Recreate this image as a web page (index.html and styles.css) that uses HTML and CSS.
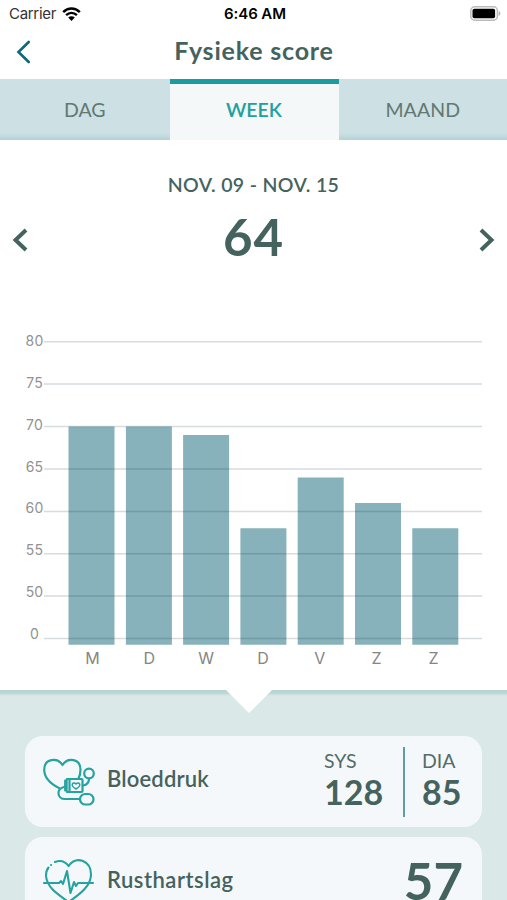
FILE: index.html
```html
<!DOCTYPE html>
<html lang="nl">
<head>
<meta charset="utf-8">
<title>Fysieke score</title>
<link rel="stylesheet" href="styles.css">
</head>
<body>
<div class="screen">
  <div class="status">
    <div class="carrier"><span>Carrier</span>
      <svg width="19" height="14" viewBox="0 0 19 14" fill="none" stroke="#000" stroke-width="2.5"><path d="M1.2 5.1C6 .4 13 .4 17.8 5.1M4.1 8.2c3.2-3 7.600-3 10.800 0"/><path d="M6.200 10.600c1.900-1.700 4.700-1.700 6.600 0L9.500 14z" fill="#000" stroke="none"/></svg>
    </div>
    <span class="time">6:46 AM</span>
    <svg class="battery" width="31" height="15" viewBox="0 0 31 15"><rect x=".8" y=".8" width="26.600" height="13.400" rx="4" fill="#fff" stroke="#bbb" stroke-width="1.500"/><rect x="2.500" y="2.700" width="22.600" height="9.600" rx="1.800"/><path d="M28.700 5c2.200.8 2.200 4.200 0 5z" fill="#b5b5b5"/></svg>
  </div>
  <header class="header">
    <svg width="15" height="24" viewBox="0 0 15 24" fill="none" stroke="#12697d" stroke-width="2.700" stroke-linecap="round"><path d="M12.700 2 2.500 12l10.200 10"/></svg>
    <h1>Fysieke score</h1>
  </header>
  <nav class="tabs">
    <div class="tab"><span>DAG</span></div>
    <div class="tab active"><span>WEEK</span></div>
    <div class="tab"><span class="maand">MAAND</span></div>
  </nav>
  <section class="summary">
    <div class="range">NOV. 09 - NOV. 15</div>
    <div class="pager">
      <svg width="17" height="24" viewBox="0 0 17 24" fill="none" stroke="#45635e" stroke-width="4"><path d="M15 2 4.500 12 15 22"/></svg>
      <div class="score">64</div>
      <svg width="17" height="24" viewBox="0 0 17 24" fill="none" stroke="#45635e" stroke-width="4"><path d="M2 2l10.500 10L2 22"/></svg>
    </div>
  </section>
  <section class="chart">
    <div class="axis"><span>80</span><span>75</span><span>70</span><span>65</span><span>60</span><span>55</span><span>50</span><span>0</span></div>
    <svg class="plot" width="438" height="325" viewBox="0 0 438 325">
      <path fill="#88b2bb" d="M24.500 106.500h46v218.200h-46zM81.900 106.500h46v218.200h-46zM139.100 115h46v209.700h-46zM196.400 208.300h46v116.400h-46zM253.700 157.500h46v167.200h-46zM311 183h46v141.700h-46zM368.300 208.300h46v116.400h-46z"/>
      <path stroke="#002030" stroke-opacity=".155" stroke-width="1.500" d="M0 21.700h438M0 64.100h438M0 106.500h438M0 149h438M0 191.400h438M0 233.700h438M0 276.100h438M0 318.500h438"/>
    </svg>
    <div class="days"><span>M</span><span>D</span><span>W</span><span>D</span><span>V</span><span>Z</span><span>Z</span></div>
  </section>
  <section class="details">
    <svg class="notch" width="46" height="23" viewBox="0 0 46 23"><path d="M0 0h46L23 23z" fill="#fff"/></svg>
    <div class="card">
      <svg class="icon" width="52" height="48" viewBox="0 0 52 48" fill="none" stroke="#26a3a0" stroke-width="2.200" stroke-linecap="round" stroke-linejoin="round"><path d="M16 30C7 25.500 1.200 19 1.200 11.500 1.200 1 14-1.500 19.500 7 25-1.500 37.500 1 37.500 11.500c0 3-.5 6-2 9"/><circle cx="46" cy="15.500" r="4.800"/><path d="M46 20.500c0 4-2.500 6.500-6 7"/><rect x="26.500" y="21" width="13" height="13" rx="1"/><path d="M26.500 21h-2.700v13h2.700M23.800 22.500H22v10h1.800" stroke-width="1.800"/><path d="M33 31c-7-4-2.500-8 0-5 2.500-3 7 1 0 5z" stroke-width="1.500"/><path d="M21 29c-8 2-7 12 1 12h15"/><rect x="37" y="36" width="13.500" height="10.500" rx="5.250"/></svg>
      <span class="name bloeddruk">Bloeddruk</span>
      <div class="reading sys"><small>SYS</small><strong>128</strong></div>
      <div class="divider"></div>
      <div class="reading dia"><small>DIA</small><strong>85</strong></div>
    </div>
    <div class="card">
      <svg class="icon" width="52" height="50" viewBox="0 0 52 50" fill="none" stroke="#26a3a0" stroke-width="2.100" stroke-linecap="round" stroke-linejoin="round"><path d="M1 25h15l2-2 2 3 4-13 3.500 22L31 24l2 4 2-3h15"/><path d="M12 4c5-2 10-1 13.500 4C34-3 48 3 48 16.500 48 27 39 35 25.500 44 13 35 4 29 3 18c0-3 .5-6 2.500-8.500M8 7h.1"/></svg>
      <span class="name rusthartslag">Rusthartslag</span>
      <strong class="big">57</strong>
    </div>
  </section>
</div>
</body>
</html>
```
FILE: styles.css
```css
* { box-sizing: border-box; }
body { margin: 0; background: #fff; }
.screen { width: 507px; height: 900px; overflow: hidden; font-family: Lato, sans-serif; color: #45635e; }
.status { height: 28px; display: grid; grid-template-columns: 1fr auto 1fr; align-items: center; padding: 0 6px 0 9px; font: 15px/20px Inter, sans-serif; color: #111; }
.carrier { display: flex; align-items: center; gap: 6px; letter-spacing: -.3px; }
.carrier span { color: #333; }
.time { font-weight: 600; letter-spacing: -.1px; color: #000; }
.battery { justify-self: end; margin-top: -1px; }
.header { height: 51px; display: grid; grid-template-columns: 15px 1fr 15px; align-items: center; padding: 0 15px 4px 16px; }
.header h1 { margin: -4px 0 0; text-align: center; font-size: 25px; letter-spacing: .8px; line-height: 30px; font-weight: 700; }
.header svg { margin-top: 1px; }
.tabs { height: 61px; display: grid; grid-template-columns: 169.500px 169px 1fr; }
.tab { display: flex; align-items: center; justify-content: center; background: linear-gradient(#cde0e3 0 54px, #b4d2d7 61px); font-size: 19.500px; color: #617873; padding-bottom: 1px; }
.tab.active { background: #f5f8f8; border-top: 5px solid #1b9d9f; color: #20a09e; font-weight: 600; padding: 0 0 5px; }
.maand { letter-spacing: .1px; }
.summary { height: 180px; padding-top: 32px; }
.range { text-align: center; font-size: 19.500px; letter-spacing: .35px; line-height: 26px; font-weight: 600; }
.pager { height: 80px; display: flex; align-items: center; justify-content: space-between; padding: 0 11px; }
.pager svg { margin-top: 3px; }
.score { font-size: 51px; letter-spacing: 1px; line-height: 60px; font-weight: 700; margin-top: -2px; }
.chart { height: 370px; display: grid; grid-template-columns: 44px 438px; grid-template-rows: 325px 28px; }
.axis { display: flex; flex-direction: column; padding: 11px 0 0 25px; font: 14px/20px Inter, sans-serif; color: #929292; }
.axis span { height: 41.850px; width: 19px; text-align: center; flex: none; letter-spacing: .2px; }
.plot { display: block; }
.days { grid-column: 2; display: grid; grid-template-columns: repeat(7, 56.850px); padding-left: 20px; font: 16px/27px Inter, sans-serif; color: #858585; text-align: center; }
.details { height: 210px; position: relative; padding: 46px 25px 0; display: flex; flex-direction: column; gap: 10px; background: linear-gradient(#b4d3d2, #bbd7d6 3px, #dbe8e8 6px); }
.notch { position: absolute; left: 226px; top: 0; }
.card { height: 91px; flex: none; border-radius: 18px; background: #f5f8fa; display: flex; align-items: center; padding: 0 19px 0 18px; }
.icon { flex: none; }
.name { font-size: 22px; line-height: 28px; font-weight: 600; margin: -5px auto 0 12px; }
.bloeddruk { letter-spacing: .15px; }
.rusthartslag { letter-spacing: .5px; }
.reading { display: flex; flex-direction: column; margin-top: -5px; }
.reading small { font-size: 19.500px; line-height: 24px; font-weight: 400; color: #526d68; }
.reading strong { font-size: 34px; line-height: 37px; font-weight: 700; }
.sys { width: 79px; }
.divider { width: 2px; height: 70px; background: #629ba3; }
.dia { width: 41px; margin-left: 17px; }
.big { font-size: 51px; line-height: 60px; margin-top: -4px; }
```
